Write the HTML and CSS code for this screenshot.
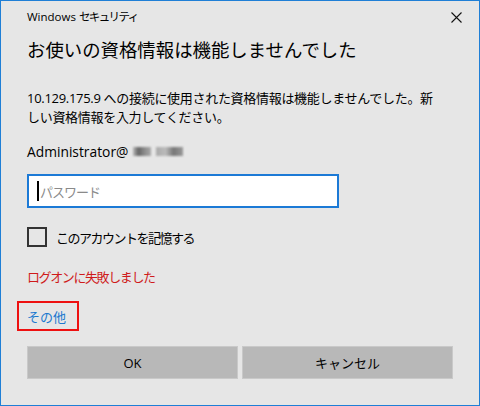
FILE: index.html
```html
<!DOCTYPE html>
<html lang="ja">
<head>
<meta charset="utf-8">
<title>Windows セキュリティ</title>
<link rel="stylesheet" href="styles.css">
</head>
<body>
<div class="window">
  <div class="titlebar">
    <span class="title">Windows <span class="kana">セキュリティ</span></span>
    <span class="close" aria-label="閉じる">
      <svg width="11" height="11" viewBox="0 0 11 11"><path d="M0.5 0.5 L10.5 10.5 M10.5 0.5 L0.5 10.5" stroke="#111" stroke-width="1.1" fill="none"/></svg>
    </span>
  </div>
  <div class="content">
    <h1 class="heading">お使いの資格情報は機能しませんでした</h1>
    <p class="message">10.129.175.9 への接続に使用された資格情報は機能しませんでした。新<br>しい資格情報を入力してください。</p>
    <p class="user">Administrator@ <span class="blur b1"></span><span class="blur b2"></span></p>
    <div class="input"><span class="caret"></span><span class="placeholder">パスワード</span></div>
    <label class="check"><span class="box"></span><span class="check-label">このアカウントを記憶する</span></label>
    <p class="error">ログオンに失敗しました</p>
    <div class="more"><span class="more-link">その他</span></div>
    <div class="buttons">
      <button class="btn">OK</button>
      <button class="btn">キャンセル</button>
    </div>
  </div>
</div>
</body>
</html>
```

FILE: styles.css
```css
html, body {
  margin: 0;
  padding: 0;
}
body {
  font-family: "Open Sans", "Noto Sans CJK JP", sans-serif;
  color: #000;
}
.window {
  width: 480px;
  height: 406px;
  box-sizing: border-box;
  border: 1px solid #1f7fd6;
  background: #e6e6e6;
}
.titlebar {
  height: 32px;
  display: flex;
  align-items: center;
  padding-left: 26px;
}
.title {
  font-size: 11.5px;
  line-height: 16px;
  color: #000;
}
.title .kana {
  letter-spacing: -1.6px;
}
.close {
  margin-left: auto;
  width: 46px;
  height: 32px;
  display: flex;
  align-items: center;
  justify-content: center;
}
.content {
  padding: 0 26px;
}
.heading {
  margin: 4px 0 0;
  font-family: "Noto Sans CJK JP", sans-serif;
  font-weight: normal;
  font-size: 18.4px;
  line-height: 24px;
  color: #000;
}
.message {
  margin: 28px 0 0;
  font-size: 13px;
  line-height: 19px;
  letter-spacing: -0.3px;
  white-space: nowrap;
}
.user {
  margin: 15px 0 0;
  font-size: 13.8px;
  line-height: 19px;
  display: flex;
  align-items: center;
}
.blur {
  display: inline-block;
  height: 9px;
  filter: blur(1.2px);
}
.b1 {
  width: 18px;
  margin-left: 5px;
  background: linear-gradient(90deg, #b8b8b8 0, #666 30%, #888 60%, #aaa 100%);
}
.b2 {
  width: 27px;
  margin-left: 5px;
  background: linear-gradient(90deg, #aaa 0, #bbb 35%, #777 65%, #999 100%);
}
.input {
  margin-top: 13px;
  width: 312px;
  height: 34px;
  box-sizing: border-box;
  border: 2px solid #1c7ad6;
  background: #fff;
  display: flex;
  align-items: center;
  padding-left: 8px;
}
.caret {
  width: 2px;
  height: 20px;
  background: #000;
}
.placeholder {
  margin-left: 1px;
  font-size: 13px;
  color: #8a8a8a;
  letter-spacing: -1px;
}
.check {
  margin-top: 19px;
  display: flex;
  align-items: center;
  height: 20px;
}
.box {
  width: 20px;
  height: 20px;
  box-sizing: border-box;
  border: 2px solid #333;
}
.check-label {
  margin-left: 9px;
  font-size: 13px;
  letter-spacing: -1.5px;
}
.error {
  margin: 21px 0 0;
  font-size: 13px;
  line-height: 19px;
  color: #cf1b1b;
  letter-spacing: -1.4px;
}
.more {
  margin-top: 14px;
  margin-left: -10px;
  width: 62px;
  height: 30px;
  box-sizing: border-box;
  border: 2px solid #ee1111;
  display: flex;
  align-items: center;
  padding-left: 8px;
}
.more-link {
  font-size: 13px;
  color: #2079cf;
}
.buttons {
  margin-top: 15px;
  display: grid;
  grid-template-columns: 211px 211px;
  gap: 4px;
}
.btn {
  height: 33px;
  box-sizing: border-box;
  border: 1px solid #c9c9c9;
  background: #b8b8b8;
  font-family: "Open Sans", "Noto Sans CJK JP", sans-serif;
  font-size: 13px;
  color: #000;
  padding: 0;
}
```
